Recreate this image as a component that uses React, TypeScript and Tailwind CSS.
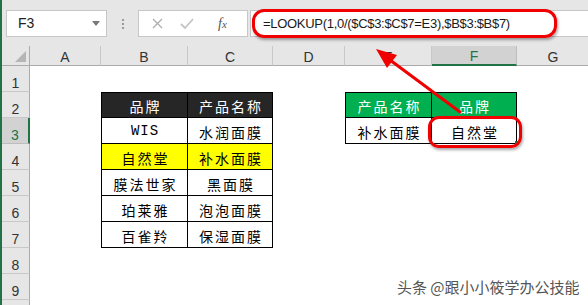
import React from "react";

const COLS = ["", "A", "B", "C", "D", "E", "F", "G"];

type Cell = { t: string; kind: "dark" | "green" | "yellow" | "plain"; mono?: boolean };

const DATA: Record<string, Cell> = {
  "2-2": { t: "品牌", kind: "dark" },
  "2-3": { t: "产品名称", kind: "dark" },
  "3-2": { t: "WIS", kind: "plain", mono: true },
  "3-3": { t: "水润面膜", kind: "plain" },
  "4-2": { t: "自然堂", kind: "yellow" },
  "4-3": { t: "补水面膜", kind: "yellow" },
  "5-2": { t: "膜法世家", kind: "plain" },
  "5-3": { t: "黑面膜", kind: "plain" },
  "6-2": { t: "珀莱雅", kind: "plain" },
  "6-3": { t: "泡泡面膜", kind: "plain" },
  "7-2": { t: "百雀羚", kind: "plain" },
  "7-3": { t: "保湿面膜", kind: "plain" },
  "2-5": { t: "产品名称", kind: "green" },
  "2-6": { t: "品牌", kind: "green" },
  "3-5": { t: "补水面膜", kind: "plain" },
  "3-6": { t: "自然堂", kind: "plain" },
};

const CJK = "font-['Noto_Sans_CJK_SC','Noto_Sans',sans-serif]";

function TableCell({ r, c, cell }: { r: number; c: number; cell: Cell }) {
  const first = c === 2 || c === 5;
  const top = r === 2;
  const bg =
    cell.kind === "dark"
      ? "bg-[#262626] text-white"
      : cell.kind === "green"
      ? "bg-[#00b050] text-white"
      : cell.kind === "yellow"
      ? "bg-[#ffff00] text-black"
      : "bg-white text-black";
  const borders = top
    ? first
      ? "border-t border-l border-r border-b border-black"
      : "border-t border-r border-b border-black"
    : first
    ? "border-l border-r border-b border-black"
    : "border-r border-b border-black";
  return (
    <div className={`flex items-center justify-center pt-[2px] ${bg} ${borders}`}>
      {cell.mono ? (
        <span className="font-['Liberation_Mono',monospace] text-[14px] tracking-[1px] pl-[1px]">{cell.t}</span>
      ) : (
        <span className={`${CJK} text-[14px] leading-[18px] tracking-[2px] pl-[2px]`}>{cell.t}</span>
      )}
    </div>
  );
}

export default function App() {
  const rows = [1, 2, 3, 4, 5, 6, 7, 8, 9, 10];
  return (
    <div className="relative w-[588px] h-[305px] overflow-hidden flex bg-white font-['Liberation_Sans',Arial,sans-serif]">
      <div className="w-[2px] shrink-0 bg-[#217346]" />
      <div className="flex-1 flex flex-col min-w-0">
        {/* toolbar */}
        <div className="h-[46px] shrink-0 bg-[#e6e6e6] flex items-start pt-[10px] pl-[4px]">
          <div className="w-[101px] h-[27px] shrink-0 bg-white border border-[#c6c6c6] flex items-center justify-between pl-[11px] pr-[6px]">
            <span className="text-[14px] text-[#222]">F3</span>
            <svg width="8" height="5" viewBox="0 0 8 5">
              <polygon points="0,0 8,0 4,5" fill="#777" />
            </svg>
          </div>
          <div className="w-[31px] h-[27px] shrink-0 flex flex-col items-center justify-center gap-[2px]">
            <div className="w-[2px] h-[2px] bg-[#9a9a9a]" />
            <div className="w-[2px] h-[2px] bg-[#9a9a9a]" />
            <div className="w-[2px] h-[2px] bg-[#9a9a9a]" />
          </div>
          <div className="w-[110px] h-[27px] shrink-0 bg-white border border-[#c6c6c6] flex items-center">
            <svg className="ml-[13px]" width="11" height="11" viewBox="0 0 11 11">
              <path d="M1 1 L10 10 M10 1 L1 10" stroke="#b0b0b0" strokeWidth="1.4" fill="none" />
            </svg>
            <svg className="ml-[17px]" width="14" height="11" viewBox="0 0 14 11">
              <path d="M1 6 L5 10 L13 1" stroke="#c4c4c4" strokeWidth="1.8" fill="none" />
            </svg>
            <span className="ml-[24px] font-['Liberation_Serif',serif] italic text-[14px] text-[#555] leading-none">
              f<span className="text-[11px]">x</span>
            </span>
          </div>
          <div className="ml-[2px] flex-1 h-[27px] bg-white border border-[#c6c6c6] border-r-0 flex items-center pl-[12px]">
            <span className="text-[13px] tracking-[-0.3px] text-[#1a1a1a] whitespace-nowrap">
              =LOOKUP(1,0/($C$3:$C$7=E3),$B$3:$B$7)
            </span>
          </div>
        </div>
        {/* sheet grid */}
        <div className="grid grid-cols-[28px_71px_87px_85px_72px_87px_85px_73px] grid-rows-[20px_repeat(10,26px)]">
          {COLS.map((c, i) =>
            i === 0 ? (
              <div key="corner" className="bg-[#e6e6e6] border-r border-b border-[#ababab] relative">
                <svg className="absolute right-[3px] bottom-[3px]" width="11" height="11" viewBox="0 0 11 11">
                  <polygon points="11,0 11,11 0,11" fill="#b5b5b5" />
                </svg>
              </div>
            ) : c === "F" ? (
              <div key={c} className="bg-[#d2d2d2] border-r border-[#bdbdbd] border-b-2 border-b-[#217346] flex items-end justify-center">
                <span className="text-[14px] leading-[16px] text-[#217346]">{c}</span>
              </div>
            ) : (
              <div key={c} className="bg-[#e6e6e6] border-r border-[#c8c8c8] border-b border-b-[#ababab] flex items-end justify-center">
                <span className="text-[14px] leading-[16px] text-[#333]">{c}</span>
              </div>
            )
          )}
          {rows.map((r) =>
            COLS.map((_, c) => {
              if (c === 0) {
                if (r === 10) {
                  return <div key={`${r}-0`} className="bg-[#e6e6e6] border-r border-r-[#ababab]" />;
                }
                return r === 3 ? (
                  <div key={`${r}-0`} className="bg-[#d2d2d2] border-r-2 border-r-[#217346] border-b border-b-[#bdbdbd] flex items-end justify-center">
                    <span className="text-[14px] leading-[16px] text-[#217346]">{r}</span>
                  </div>
                ) : (
                  <div key={`${r}-0`} className="bg-[#e6e6e6] border-r border-r-[#ababab] border-b border-b-[#c8c8c8] flex items-end justify-center">
                    <span className="text-[14px] leading-[16px] text-[#333]">{r}</span>
                  </div>
                );
              }
              const cell = DATA[`${r}-${c}`];
              if (cell) return <TableCell key={`${r}-${c}`} r={r} c={c} cell={cell} />;
              return <div key={`${r}-${c}`} className="bg-white" />;
            })
          )}
        </div>
      </div>

      {/* fill handle of active cell */}
      <div className="absolute left-[515px] top-[141px] w-[4px] h-[4px] bg-[#217346]" />

      {/* annotation: ring around formula */}
      <div className="absolute left-[252px] top-[9px] w-[305px] h-[29px] border-[3px] border-[#f00000] rounded-[12px] shadow-[1px_2px_3px_rgba(0,0,0,0.35)]" />
      {/* annotation: ring around F3 */}
      <div className="absolute left-[428px] top-[116px] w-[94px] h-[32px] border-[3px] border-[#f00000] rounded-[11px] shadow-[1px_2px_3px_rgba(0,0,0,0.35)]" />
      {/* arrow */}
      <svg className="absolute left-0 top-0 pointer-events-none" width="588" height="305" viewBox="0 0 588 305">
        <line x1="460" y1="112" x2="390" y2="60" stroke="#f00000" strokeWidth="3" strokeLinecap="round" />
        <polygon points="376,49 397,55 387,68" fill="#f00000" />
      </svg>

      {/* watermark */}
      <div className={`absolute left-[397px] top-[278px] ${CJK} text-[15px] leading-[18px] text-[#555] whitespace-nowrap [text-shadow:0_0_2px_#fff,0_0_1px_#fff]`}>
        头条 @跟小小筱学办公技能
      </div>
    </div>
  );
}
